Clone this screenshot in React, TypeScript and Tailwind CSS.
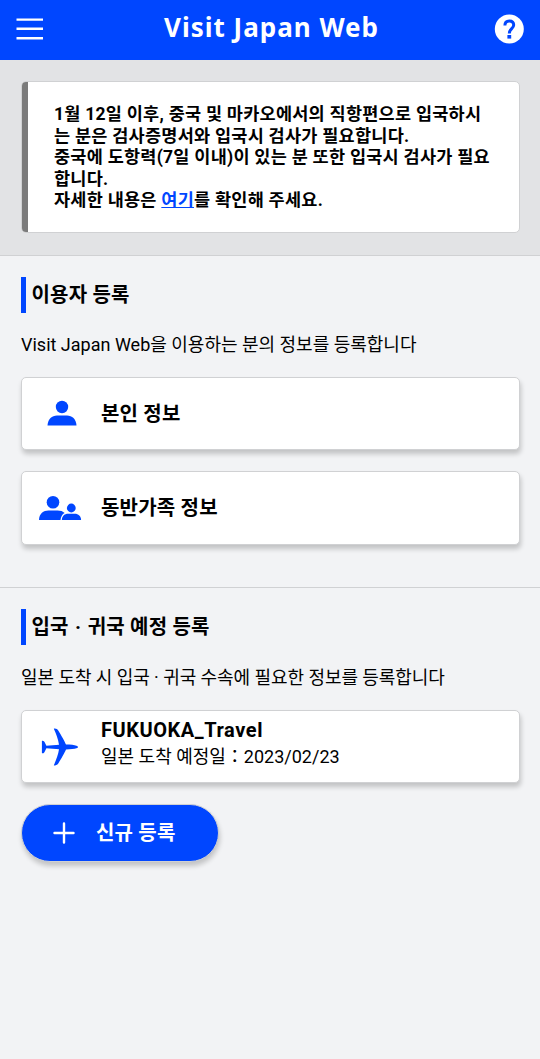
import type { ReactNode } from "react";

const SectionHeading = ({ children }: { children: ReactNode }) => (
  <h2 className="h-9 border-l-5 border-[#0046ff] pl-[5.5px] text-[20px] font-bold leading-9 tracking-[0.2px] whitespace-nowrap">
    {children}
  </h2>
);

const Card = ({ icon, children }: { icon: ReactNode; children: ReactNode }) => (
  <button className="flex h-[73.4px] w-full items-center rounded-[5px] border border-[#d0d1d3] bg-white text-left shadow-[1px_4px_5px_rgba(0,0,0,0.2)]">
    <span className="flex w-[79px] shrink-0 justify-center">{icon}</span>
    {children}
  </button>
);

const MenuIcon = () => (
  <svg width="28" height="24" viewBox="0 0 28 24" stroke="#fff" strokeWidth="2.4" aria-hidden="true">
    <path d="M0.5 1.6H27M0.5 10.7H27M0.5 20.2H27" />
  </svg>
);

const HelpIcon = () => (
  <svg width="30" height="30" viewBox="0 0 30 30" aria-hidden="true">
    <circle cx="15.3" cy="15" r="14.5" fill="#fff" />
    <path d="M10.9 11.4C10.9 8.5 12.7 6.9 15.3 6.9C18 6.9 19.7 8.5 19.7 11C19.7 14.6 15.3 14.8 15.3 19.4" fill="none" stroke="#0046ff" strokeWidth="3" />
    <rect x="13.4" y="21" width="3.8" height="3.6" fill="#0046ff" />
  </svg>
);

const PersonIcon = () => (
  <svg className="mr-px mb-px ml-px" width="30" height="26" viewBox="0 0 30 26" fill="#0046ff" aria-hidden="true">
    <circle cx="15" cy="7" r="6.2" />
    <path d="M0.5 25.5C0.8 19 5 15.5 10 15.5H20C25 15.5 29.2 19 29.5 25.5Z" />
  </svg>
);

const FamilyIcon = () => (
  <svg className="mr-1" width="44" height="26" viewBox="0 0 44 26" fill="#0046ff" aria-hidden="true">
    <circle cx="15" cy="7.2" r="6.3" />
    <path d="M1 25C1.2 18.5 5.5 15.4 10.5 15.4H19.5C22.5 15.4 25 16.2 26.6 17.9C24.3 19 22.8 21.5 22.5 25Z" />
    <circle cx="33.3" cy="13" r="4.4" />
    <path d="M23.8 25C24 20.8 26.8 18.8 30 18.8H36.6C40.5 18.8 43 21.3 43.1 25Z" />
  </svg>
);

const PlaneIcon = () => (
  <svg className="mr-1" width="38" height="38" viewBox="0 0 38 38" fill="#0046ff" aria-hidden="true">
    <path d="M12.8 0.8C14.6 0.2 16.4 1.2 17.4 2.8C20.2 7.2 23.5 13.2 25 16.6C29.5 16.7 33.5 17 35.4 17.7C37.6 18.5 37.6 19.5 35.4 20.3C33.5 21 29.5 21.3 25 21.4C23.5 24.8 20.2 30.8 17.4 35.2C16.4 36.8 14.6 37.8 12.8 37.2C14.8 33 17.3 26.5 18 21.3C14.5 21 9 20.6 5.4 20.3L3.4 24.2C2.7 25.2 1.8 25.5 0.9 25.3V12.7C1.8 12.5 2.7 12.8 3.4 13.8L5.4 17.7C9 17.4 14.5 17 18 16.7C17.3 11.5 14.8 5 12.8 0.8Z" />
  </svg>
);

const PlusIcon = () => (
  <svg width="22" height="22" viewBox="0 0 22 22" stroke="#fff" strokeWidth="2.4" strokeLinecap="round" aria-hidden="true">
    <path d="M11 1.5V20.5M1.5 11H20.5" />
  </svg>
);

const App = () => (
  <div
    lang="ko"
    className="min-h-screen bg-[#f2f3f5] font-['Roboto','Noto_Sans_CJK_KR',sans-serif] text-black"
  >
    <header className="flex h-[60px] items-center justify-between bg-[#0046ff] pr-4 pl-4">
      <button className="flex w-[33px]" aria-label="메뉴">
        <MenuIcon />
      </button>
      <h1 className="pb-1.5 font-['Noto_Sans',sans-serif] text-[26px] font-bold tracking-[1px] whitespace-nowrap text-white">
        Visit Japan Web
      </h1>
      <button className="flex w-[30px] pb-[3px]" aria-label="도움말">
        <HelpIcon />
      </button>
    </header>

    {/* Notice */}
    <div className="h-[196px] border-b border-[#d0d1d3] bg-[#e2e3e5] pt-[21px] pr-5 pl-[21px]">
      <div className="flex h-[152px] overflow-hidden rounded-[5px] border border-[#d0d1d3] bg-white">
        <div className="w-1.5 shrink-0 bg-[#7b7b7b]" />
        <p className="pt-[22px] pl-[26px] text-[17.5px] font-bold leading-[21.6px] tracking-[0.25px] whitespace-nowrap">
          1월 12일 이후, 중국 및 마카오에서의 직항편으로 입국하시
          <br />
          는 분은 검사증명서와 입국시 검사가 필요합니다.
          <br />
          중국에 도항력(7일 이내)이 있는 분 또한 입국시 검사가 필요
          <br />
          합니다.
          <br />
          자세한 내용은{" "}
          <a href="#" className="text-[#0046ff] underline">여기</a>를 확인해 주세요.
        </p>
      </div>
    </div>

    {/* User registration */}
    <section className="h-[332px] border-b border-[#d0d1d3] pt-[21px] pr-5 pl-[21px]">
      <SectionHeading>이용자 등록</SectionHeading>
      <p className="mt-5 text-[18px] leading-6 whitespace-nowrap">
        Visit Japan Web을 이용하는 분의 정보를 등록합니다
      </p>
      <div className="mt-5 flex flex-col gap-[21px]">
        <Card icon={<PersonIcon />}>
          <span className="text-[20px] font-bold tracking-[0.2px]">본인 정보</span>
        </Card>
        <Card icon={<FamilyIcon />}>
          <span className="text-[20px] font-bold tracking-[0.2px]">동반가족 정보</span>
        </Card>
      </div>
    </section>

    {/* Trip registration */}
    <section className="pt-[21px] pr-5 pl-[21px]">
      <SectionHeading>
        입국<span className="px-[1.2px]"> · </span>귀국 예정 등록
      </SectionHeading>
      <p className="mt-[21px] mb-5 text-[18px] leading-6 tracking-[-0.06px] whitespace-nowrap">
        일본 도착 시 입국 · 귀국 수속에 필요한 정보를 등록합니다
      </p>
      <Card icon={<PlaneIcon />}>
        <span className="flex flex-col pb-[7px]">
          <span className="text-[20px] font-bold leading-7 tracking-[0.55px]">FUKUOKA_Travel</span>
          <span className="text-[18px] leading-[26px]">일본 도착 예정일：2023/02/23</span>
        </span>
      </Card>
      <button className="mt-[21px] flex h-[58px] w-[198px] items-center rounded-full border border-[#d0d1d3] bg-[#0046ff] pl-[31px] text-white shadow-[1px_4px_5px_rgba(0,0,0,0.2)]">
        <PlusIcon />
        <span className="pl-[21px] text-[20px] font-bold tracking-[0.2px]">신규 등록</span>
      </button>
    </section>
  </div>
);

export default App;
